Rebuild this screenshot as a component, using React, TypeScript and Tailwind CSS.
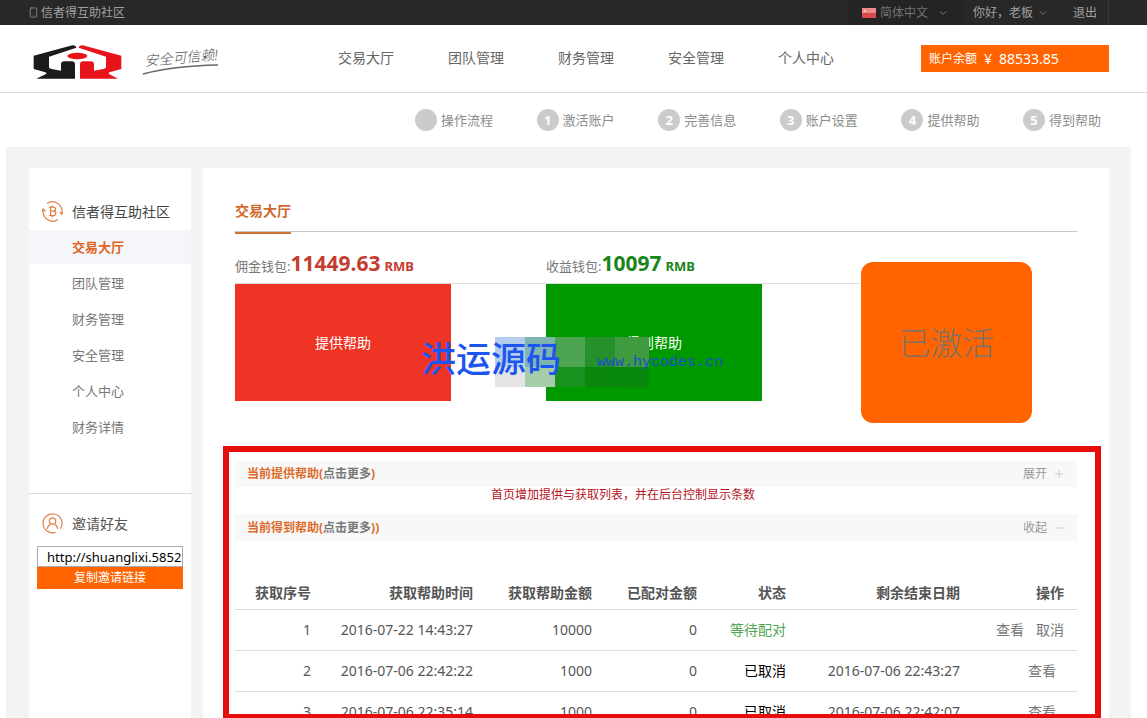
import { ChevronDown, Minus, Plus, Smartphone } from "lucide-react";

const navItems = ["交易大厅", "团队管理", "财务管理", "安全管理", "个人中心"];

const steps = ["操作流程", "激活账户", "完善信息", "账户设置", "提供帮助", "得到帮助"];

const sideItems = [
  "交易大厅",
  "团队管理",
  "财务管理",
  "安全管理",
  "个人中心",
  "财务详情",
];

const columns = [
  { title: "获取序号", width: "w-[89px]" },
  { title: "获取帮助时间", width: "w-[162px]" },
  { title: "获取帮助金额", width: "w-[119px]" },
  { title: "已配对金额", width: "w-[105px]" },
  { title: "状态", width: "w-[89px]" },
  { title: "剩余结束日期", width: "w-[174px]" },
  { title: "操作", width: "" },
];

const rows = [
  {
    id: 1,
    time: "2016-07-22 14:43:27",
    amount: 10000,
    matched: 0,
    status: "等待配对",
    end: "",
    pending: true,
  },
  {
    id: 2,
    time: "2016-07-06 22:42:22",
    amount: 1000,
    matched: 0,
    status: "已取消",
    end: "2016-07-06 22:43:27",
    pending: false,
  },
  {
    id: 3,
    time: "2016-07-06 22:35:14",
    amount: 1000,
    matched: 0,
    status: "已取消",
    end: "2016-07-06 22:42:07",
    pending: false,
  },
];

function Logo() {
  return (
    <svg className="h-[34px] w-[89px]" viewBox="0 0 267 102" aria-hidden="true">
      <path
        fill="#1c1a1b"
        d="M2 32 118 1q10 0 12 7L48 35v31q0 5 8 6l28 5V58q0-9 10-9h22q10 0 10 10v42H10l29-14q4-3-2-5L2 72z"
      />
      <path
        fill="#e8141c"
        d="M265 32 149 1q-10 0-12 7l82 27v31q0 5-8 6l-28 5V58q0-9-10-9h-22q-10 0-10 10v42h114l-27-14q-4-3 2-5l35-10z"
      />
      <ellipse cx="133" cy="33" rx="30" ry="10" fill="#e8141c" />
    </svg>
  );
}

function Slogan() {
  return (
    <svg className="h-[32px] w-[78px]" viewBox="0 0 78 32" aria-hidden="true">
      <text
        x="3"
        y="20"
        fontSize="14"
        fontStyle="italic"
        fontWeight="300"
        fill="#555"
        transform="rotate(-5 3 20)"
      >
        安全可信赖!
      </text>
      <path d="M1 28Q30 20 76 19" fill="none" stroke="#666" strokeWidth="1.4" />
    </svg>
  );
}

function CoinIcon() {
  return (
    <svg
      className="size-[21px]"
      viewBox="0 0 21 21"
      fill="none"
      stroke="#dc8246"
      strokeWidth="1.2"
      aria-hidden="true"
    >
      <path d="M5 2.5A9.6 9.6 0 0 1 20 10.5v2M16 18.5A9.6 9.6 0 0 1 1 10.5v-2" />
      <path d="m17.6 11 2.2 2.2L21 11M3.4 10.5 1.2 8 0 10.5" />
      <path d="M8 6.2h3.2c3 0 3 4 0 4H8m3.2 0c3.4 0 3.4 4.4 0 4.4H8M7 6.2h1.6v8.4H7M10.4 4.4v1.8m0 8.4v2" />
    </svg>
  );
}

function PersonIcon() {
  return (
    <svg
      className="size-[21px]"
      viewBox="0 0 21 21"
      fill="none"
      stroke="#dc8246"
      strokeWidth="1.2"
      aria-hidden="true"
    >
      <path d="M13.5 19.4A9.5 9.5 0 1 1 18.5 15.6" />
      <circle cx="10.5" cy="8" r="3.2" />
      <path d="M5.2 16c.4-2.8 2-4.2 3.4-4.8M15.8 16c-.4-2.8-2-4.2-3.4-4.8" />
    </svg>
  );
}

function TopBar() {
  return (
    <div className="flex h-[25px] shrink-0 items-center justify-between bg-[#282828] pr-[38px] pl-7 text-xs text-[#a0a0a0]">
      <div className="flex items-center gap-0.5">
        <Smartphone className="size-[11px] text-[#888]" />
        <span>信者得互助社区</span>
      </div>
      <div className="flex h-full items-center">
        <label className="flex h-full items-center gap-1 bg-[#242424] px-3.5 text-[#737373]">
          <svg className="h-[10px] w-[14px]" viewBox="0 0 14 10" aria-hidden="true">
            <rect width="14" height="10" fill="#d94a4f" />
            <rect width="14" height="5" fill="#ee8a8a" />
            <circle cx="3" cy="3" r="1" fill="#fbd9b0" />
          </svg>
          <select
            aria-label="语言"
            className="w-[53px] appearance-none bg-transparent outline-none"
          >
            <option>简体中文</option>
          </select>
          <ChevronDown className="size-3" />
        </label>
        <button className="ml-2.5 flex items-center gap-1">
          你好，老板
          <ChevronDown className="size-3 text-[#777]" />
        </button>
        <a
          href="#"
          className="ml-6 flex h-full items-center border-r border-[#3a3a3a] pr-[11px]"
        >
          退出
        </a>
      </div>
    </div>
  );
}

function Header() {
  return (
    <header className="flex h-[68px] shrink-0 items-center border-b border-[#dcdcdc] pr-[38px] pl-[33px]">
      <div className="flex w-[305px] shrink-0 items-center gap-5 pt-1.5">
        <Logo />
        <Slogan />
      </div>
      <nav className="flex gap-[54px] pb-0.5 text-sm text-[#666]">
        {navItems.map((item) => (
          <a key={item} href="#">
            {item}
          </a>
        ))}
      </nav>
      <div className="ml-auto flex h-[27px] w-[188px] items-center gap-[7px] bg-[#ff6400] px-2 text-sm text-white">
        <span className="text-xs">账户余额</span>
        <span>¥</span>
        <span>88533.85</span>
      </div>
    </header>
  );
}

function Steps() {
  return (
    <ol className="ml-auto flex h-[54px] w-[686px] shrink-0 items-center justify-between text-[13px] text-[#8c8c8c]">
      {steps.map((step, i) => (
        <li key={step} className="flex items-center gap-1">
          <span className="flex size-[22px] items-center justify-center rounded-full bg-[#cbcbcb] font-bold text-white">
            {i > 0 && i}
          </span>
          {step}
        </li>
      ))}
    </ol>
  );
}

function Sidebar() {
  return (
    <aside className="w-[162px] shrink-0 bg-white">
      <h2 className="flex h-[62px] items-end gap-[9px] px-[13px] pb-2 text-sm text-[#444]">
        <CoinIcon />
        信者得互助社区
      </h2>
      <ul className="space-y-0.5 pb-[49px] text-[13px] text-[#777]">
        {sideItems.map((item, i) => (
          <li key={item}>
            <a
              href="#"
              className={`flex h-[34px] items-center pl-[43px] ${
                i === 0 ? "bg-[#f5f6fa] font-bold text-[#e0651f]" : ""
              }`}
            >
              {item}
            </a>
          </li>
        ))}
      </ul>
      <div className="border-t border-[#dcdcdc] px-[8px] pt-[19px]">
        <h2 className="flex items-center gap-[9px] px-[5px] text-sm text-[#555]">
          <PersonIcon />
          邀请好友
        </h2>
        <input
          aria-label="邀请链接"
          readOnly
          value="http://shuanglixi.5852.com"
          className="mt-3 block h-[21px] w-full border border-[#aaa] pl-[9px] text-[13px] text-black outline-none"
        />
        <button className="block h-[22px] w-full bg-[#ff6400] text-xs text-white">
          复制邀请链接
        </button>
      </div>
    </aside>
  );
}

function Watermark() {
  return (
    <div className="absolute top-[85px] left-[186px]">
      <div className="grid grid-cols-[30px_30px_30px_30px_34px] grid-rows-[30px_20px] pl-[74px]">
        <span className="bg-[#b4cdeb]" />
        <span className="bg-[#7fb5b0]" />
        <span className="bg-[#4da552]" />
        <span className="bg-[#24912a]" />
        <span className="bg-[#3f9a40]" />
        <span className="bg-[#e4e4e5]" />
        <span className="bg-[#a6cca9]" />
        <span className="bg-[#17921f]" />
        <span className="bg-[#0a880d]" />
        <span className="bg-[#08890c]" />
      </div>
      <div className="absolute top-2 left-0 flex items-center gap-9 whitespace-nowrap">
        <span className="text-[35px] leading-7 font-medium text-[#1c55f0]">
          洪运源码
        </span>
        <span className="pt-2 font-['Liberation_Mono',monospace] text-[15px] text-[#1a50c8]">
          www.hycodes.cn
        </span>
      </div>
    </div>
  );
}

function Wallets() {
  return (
    <div className="relative mt-5 flex items-start">
      <div className="w-[311px]">
        <p className="flex h-[31px] items-baseline text-[13px] text-[#777]">
          佣金钱包:
          <b className="text-[21px] leading-[22px] text-[#c43c30]">11449.63</b>
          <b className="ml-1 text-[#c43c30]">RMB</b>
        </p>
        <div className="border-t border-[#ddd]">
          <button className="block h-[117px] w-[216px] bg-[#ef3426] text-sm text-white">
            提供帮助
          </button>
        </div>
      </div>
      <div className="w-[313px]">
        <p className="flex h-[31px] items-baseline text-[13px] text-[#777]">
          收益钱包:
          <b className="text-[21px] leading-[22px] text-[#1a851a]">10097</b>
          <b className="ml-1 text-[#1a851a]">RMB</b>
        </p>
        <div className="border-t border-[#ddd]">
          <button className="block h-[117px] w-[216px] bg-[#009a00] text-sm text-white">
            得到帮助
          </button>
        </div>
      </div>
      <div className="mt-2.5 ml-0.5 flex h-[161px] w-[171px] items-center justify-center rounded-xl bg-[#ff6400] text-[32px] font-light text-[#7d7266]">
        已激活
      </div>
      <Watermark />
    </div>
  );
}

function Records() {
  return (
    <section className="mt-[23px] mr-2 ml-5 min-h-0 flex-1 overflow-hidden border-6 border-b-4 border-[#e60d0d] pt-[9px] pr-[18px] pl-1.5">
      <div className="flex h-[26px] items-center justify-between bg-[#f8f8f8] px-3 text-xs">
        <h3 className="font-bold text-[#dc6a28]">
          当前提供帮助(<span className="text-[#777]">点击更多</span>)
        </h3>
        <button className="flex items-center gap-1.5 text-[#999]">
          展开
          <Plus className="size-3 text-[#ccc]" />
        </button>
      </div>
      <p className="h-[27px] pl-64 text-xs leading-4 text-[#b4141e]">
        首页增加提供与获取列表，并在后台控制显示条数
      </p>
      <div className="flex h-[27px] items-center justify-between bg-[#f8f8f8] px-3 text-xs">
        <h3 className="font-bold text-[#dc6a28]">
          当前得到帮助(<span className="text-[#777]">点击更多</span>))
        </h3>
        <button className="flex items-center gap-1.5 text-[#999]">
          收起
          <Minus className="size-3 text-[#ccc]" />
        </button>
      </div>
      <table className="mt-9 w-full table-fixed text-right text-sm text-[#555]">
        <thead>
          <tr className="h-8 border-b border-[#ddd]">
            {columns.map((col) => (
              <th key={col.title} className={`${col.width} pr-[13px] font-bold`}>
                {col.title}
              </th>
            ))}
          </tr>
        </thead>
        <tbody>
          {rows.map((row) => (
            <tr key={row.id} className="h-[41px] border-b border-[#ddd]">
              <td className="pr-[13px]">{row.id}</td>
              <td className="pr-[13px] whitespace-nowrap">{row.time}</td>
              <td className="pr-[13px]">{row.amount}</td>
              <td className="pr-[13px]">{row.matched}</td>
              <td
                className={`pr-[13px] ${
                  row.pending ? "text-[#4fa64f]" : "text-black"
                }`}
              >
                {row.status}
              </td>
              <td className="pr-[13px] whitespace-nowrap">{row.end}</td>
              <td className="pr-[13px] whitespace-nowrap text-[#777]">
                <a href="#" className={row.pending ? "mr-3" : "mr-2"}>
                  查看
                </a>
                {row.pending && <a href="#">取消</a>}
              </td>
            </tr>
          ))}
        </tbody>
      </table>
    </section>
  );
}

export default function App() {
  return (
    <div className="flex h-screen flex-col overflow-hidden bg-white font-['Noto_Sans','Noto_Sans_CJK_SC',sans-serif] leading-5">
      <TopBar />
      <Header />
      <div className="flex shrink-0 pr-[46px]">
        <Steps />
      </div>
      <div className="mr-4 ml-1.5 flex min-h-0 flex-1 gap-3 bg-[#f3f3f3] pt-[21px] pr-[22px] pl-[23px]">
        <Sidebar />
        <main className="flex min-w-0 flex-1 flex-col bg-white">
          <div className="mx-8 mt-8 h-8 border-b border-[#c8c8c8]">
            <h1 className="inline-block h-[33px] border-b-2 border-[#d0743c] text-sm font-bold text-[#cf682c]">
              交易大厅
            </h1>
          </div>
          <div className="mx-8">
            <Wallets />
          </div>
          <Records />
        </main>
      </div>
    </div>
  );
}
